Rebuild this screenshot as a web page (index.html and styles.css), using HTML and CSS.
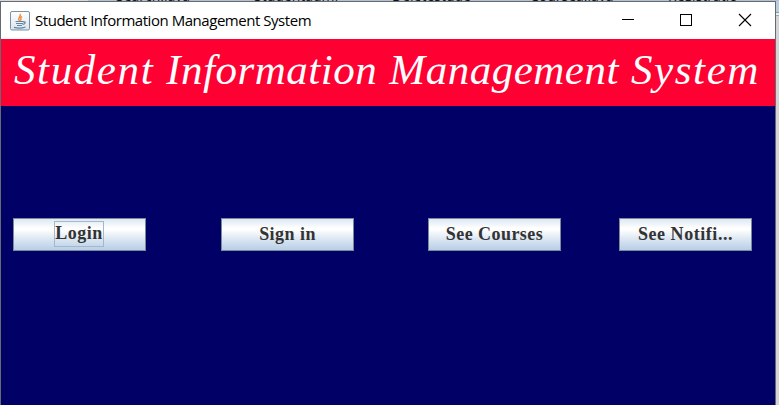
FILE: index.html
```html
<!DOCTYPE html>
<html lang="en">
<head>
<meta charset="utf-8">
<title>Student Information Management System</title>
<link rel="stylesheet" href="styles.css">
</head>
<body>
<div class="backdrop-tabs"><span>Search.java</span><span>StudentadmI</span><span>Deletestude</span><span>Coursea.java</span><span>Registratio</span></div>
<div class="window">
  <header class="titlebar">
    <svg class="app-icon" width="20" height="20" viewBox="0 0 20 20" fill="none">
      <defs><linearGradient id="tile" x2="0" y2="1"><stop stop-color="#fff"/><stop offset="1" stop-color="#dce5ec"/></linearGradient></defs>
      <rect x=".5" y=".5" width="19" height="18.5" rx="1.5" fill="url(#tile)" stroke="#7b91a3"/>
      <path d="M10 3C12 5 7 6 9.3 10M12 5.5C9 7 12 7.5 10.5 10" stroke="#ee9144" stroke-width="1.5"/>
      <path d="M5.5 10.5H13.5M6 12.5H13M7 14.5H12M13 11C16 10 16 13 12.5 13.5M4 16.4C7 17.3 12 17.3 15.5 16" stroke="#5e87a5" stroke-width="1.2"/>
    </svg>
    <span class="caption">Student Information Management System</span>
    <svg class="controls" width="130" height="14" viewBox="0 0 130 14" fill="none" stroke="#000" shape-rendering="crispEdges">
      <path d="M0 6.5H12"/><rect x="58.5" y="1.5" width="11" height="11"/><path d="M117 1L129 13M129 1L117 13" shape-rendering="auto" stroke-width="1.1"/>
    </svg>
  </header>
  <h1 class="banner"><span class="wide">Student</span> <span>Information</span> <span>Management</span> <span class="wide">System</span></h1>
  <main class="content">
    <button class="btn login"><span class="focus">Login</span></button>
    <button class="btn signin">Sign in</button>
    <button class="btn courses">See Courses</button>
    <button class="btn notifications">See Notifi...</button>
  </main>
</div>
<aside class="backdrop-edge"></aside>
</body>
</html>
```
FILE: styles.css
```css
* { box-sizing: border-box; }
body {
  margin: 0;
  width: 779px;
  height: 405px;
  overflow: hidden;
  display: grid;
  grid-template: 1px 404px / 776px 3px;
}
.backdrop-tabs {
  grid-column: 1 / 3;
  display: flex;
  align-items: flex-end;
  gap: 46px;
  padding-left: 116px;
  height: 1px;
  overflow: hidden;
  background: linear-gradient(90deg, #d8d8d8 88px, #b1c1d1 88px);
  font: 14px/10px "Open Sans", sans-serif;
  color: #111;
}
.backdrop-tabs span { flex: 0 0 92px; }
.backdrop-edge {
  background: linear-gradient(#b9cce0 11px, #8d9aa6 11px 12px, #e8edf2 12px 14px, #a0a8b0 14px 15px, #d4d4d4 15px);
}
.window {
  height: 404px;
  border: 1px solid #656b70;
  border-bottom: 0;
  background: #000066;
}
.titlebar {
  display: flex;
  align-items: center;
  height: 37px;
  padding: 0 23px 0 9px;
  background: #fff;
}
.app-icon { margin-right: 5px; }
.caption {
  margin-top: -2px;
  font: 15px/20px "Open Sans", sans-serif;
  letter-spacing: -.46px;
  color: #000;
  white-space: nowrap;
}
.controls {
  margin: -1px 0 0 auto;
}
.banner {
  display: flex;
  justify-content: space-between;
  margin: 0;
  height: 67px;
  padding: 0 15px 0 13px;
  background: #ff0033;
  color: #fff;
  font: italic 400 43px/62px "Liberation Serif", serif;
  letter-spacing: .5px;
}
.wide { letter-spacing: 1.6px; }
.content {
  display: grid;
  grid-template-columns: 208px 207px 191px 133px;
  padding: 112px 0 0 12px;
}
.btn {
  display: flex;
  align-items: center;
  justify-content: center;
  width: 133px;
  height: 33px;
  padding: 0 0 2px;
  border: 1px solid #7a8a99;
  border-radius: 0;
  background: linear-gradient(#dde8f3, #fff 30%, #fff 34%, #dce7f2 64%, #b8cfe5);
  color: #333;
  font: bold 18px/22px "Liberation Serif", serif;
  letter-spacing: .45px;
}
.notifications { letter-spacing: .55px; }
.focus {
  height: 26px;
  margin-right: 1px;
  border: 1px solid #a3b8cc;
}
```
